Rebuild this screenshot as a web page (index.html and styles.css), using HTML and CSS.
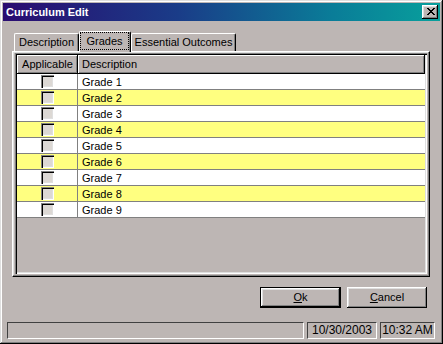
FILE: index.html
```html
<!DOCTYPE html>
<html>
<head>
<meta charset="utf-8">
<link rel="stylesheet" href="styles.css">
</head>
<body>
<div class="window">
  <div class="titlebar">
    <span class="title">Curriculum Edit</span>
    <span class="close">
      <svg width="8" height="7" viewBox="0 0 8 7" shape-rendering="crispEdges">
        <path d="M0 0h2v1h-2zM6 0h2v1h-2zM1 1h2v1h-2zM5 1h2v1h-2zM2 2h4v1h-4zM3 3h2v1h-2zM2 4h4v1h-4zM1 5h2v1h-2zM5 5h2v1h-2zM0 6h2v1h-2zM6 6h2v1h-2z" fill="#000"/>
      </svg>
    </span>
  </div>
  <div class="tabs">
    <div class="tab tab-desc">Description</div>
    <div class="tab tab-sel"><span class="focus">Grades</span></div>
    <div class="tab tab-ess">Essential Outcomes</div>
  </div>
  <div class="panel">
    <div class="grid">
      <div class="row head">
        <div class="cell c1">Applicable</div>
        <div class="cell c2">Description</div>
      </div>
      <div class="row"><div class="cell c1"><span class="chk"></span></div><div class="cell c2">Grade 1</div></div>
      <div class="row alt"><div class="cell c1"><span class="chk"></span></div><div class="cell c2">Grade 2</div></div>
      <div class="row"><div class="cell c1"><span class="chk"></span></div><div class="cell c2">Grade 3</div></div>
      <div class="row alt"><div class="cell c1"><span class="chk"></span></div><div class="cell c2">Grade 4</div></div>
      <div class="row"><div class="cell c1"><span class="chk"></span></div><div class="cell c2">Grade 5</div></div>
      <div class="row alt"><div class="cell c1"><span class="chk"></span></div><div class="cell c2">Grade 6</div></div>
      <div class="row"><div class="cell c1"><span class="chk"></span></div><div class="cell c2">Grade 7</div></div>
      <div class="row alt"><div class="cell c1"><span class="chk"></span></div><div class="cell c2">Grade 8</div></div>
      <div class="row"><div class="cell c1"><span class="chk"></span></div><div class="cell c2">Grade 9</div></div>
    </div>
  </div>
  <div class="buttons">
    <div class="btn btn-default"><span><u>O</u>k</span></div>
    <div class="btn btn-cancel"><span><u>C</u>ancel</span></div>
  </div>
  <div class="status">
    <div class="sp sp-main"></div>
    <div class="sp sp-date">10/30/2003</div>
    <div class="sp sp-time">10:32 AM</div>
  </div>
</div>
</body>
</html>
```
FILE: styles.css
```css
* { box-sizing: border-box; }
html, body { margin: 0; padding: 0; }
body {
  background: #bdb6b4;
  font-family: "Liberation Sans", Arial, sans-serif;
  font-size: 11px;
  color: #000;
}
.window {
  width: 443px;
  height: 344px;
  padding: 3px;
  background: #bdb6b4;
  box-shadow: inset -1px -1px #000, inset 1px 1px #dfdfdf, inset -2px -2px #808080, inset 2px 2px #fff;
  display: flex;
  flex-direction: column;
}
.titlebar {
  height: 18px;
  background: linear-gradient(to right, #2a0c70 0%, #1a3c88 40%, #0a7c98 75%, #08a09c 100%);
  display: flex;
  align-items: center;
  justify-content: space-between;
  padding: 0 2px 0 3px;
}
.title {
  color: #fff;
  font-weight: bold;
  font-size: 11px;
}
.close {
  width: 16px;
  height: 14px;
  background: #bdb6b4;
  box-shadow: inset -1px -1px #000, inset 1px 1px #fff, inset -2px -2px #808080, inset 2px 2px #dfdfdf;
  display: flex;
  align-items: center;
  justify-content: center;
  padding: 0 0 1px 1px;
}
.close svg { display: block; }
.tabs {
  margin: 10px 0 0 11px;
  height: 20px;
  display: flex;
  align-items: flex-end;
  position: relative;
  z-index: 2;
}
.tab {
  height: 18px;
  border-top: 1px solid #fff;
  border-left: 1px solid #fff;
  border-right: 1px solid #000;
  border-radius: 2px 2px 0 0;
  box-shadow: inset -1px 0 #808080;
  display: flex;
  align-items: center;
  justify-content: center;
  background: #bdb6b4;
  padding-bottom: 1px;
}
.tab-desc { width: 65px; }
.tab-sel {
  width: 52px;
  height: 21px;
  margin-bottom: -1px;
  padding: 1px 2px 3px 1px;
}
.tab-ess { width: 105px; }
.focus {
  display: flex;
  align-items: center;
  justify-content: center;
  width: 100%;
  height: 100%;
  outline: 1px dotted #000;
}
.panel {
  margin-left: 9px;
  width: 418px;
  height: 226px;
  border-top: 1px solid #fff;
  border-left: 1px solid #fff;
  border-right: 1px solid #000;
  border-bottom: 1px solid #000;
  box-shadow: inset -1px -1px #808080, inset 1px 1px #dfdfdf;
  padding: 1px 2px 2px 2px;
  display: flex;
}
.grid {
  flex: 1;
  padding: 2px;
  box-shadow: inset 1px 1px #808080, inset 2px 2px #000, inset -1px -1px #fff, inset -2px -2px #dfdfdf;
  display: flex;
  flex-direction: column;
}
.row {
  display: flex;
  height: 16px;
  background: #fff;
  border-bottom: 1px solid #808080;
}
.row.alt { background: #ffff80; }
.cell {
  display: flex;
  align-items: center;
}
.c1 {
  width: 61px;
  justify-content: center;
  border-right: 1px solid #808080;
}
.c2 {
  flex: 1;
  padding-left: 4px;
}
.row.head {
  height: 19px;
  background: #bdb6b4;
  border-bottom: none;
}
.head .cell {
  box-shadow: inset 1px 1px #fff, inset -1px -1px #808080;
  border-right: 1px solid #000;
  border-bottom: 1px solid #000;
}
.head .c1 { padding-left: 1px; }
.head .c2 { padding-left: 4px; }
.chk {
  width: 13px;
  height: 13px;
  background: #dcd8d4;
  box-shadow: inset 1px 1px #808080, inset 2px 2px #000, inset -1px -1px #fff, inset -2px -2px #dfdfdf;
}
.buttons {
  margin: 10px 13px 0 0;
  display: flex;
  justify-content: flex-end;
  gap: 6px;
}
.btn {
  height: 21px;
  display: flex;
  align-items: center;
  justify-content: center;
  background: #bdb6b4;
  padding-bottom: 1px;
}
.btn-default {
  width: 81px;
  border: 1px solid #000;
  box-shadow: inset -1px -1px #000, inset 1px 1px #fff, inset -2px -2px #808080, inset 2px 2px #dfdfdf;
}
.btn-cancel {
  width: 80px;
  box-shadow: inset -1px -1px #000, inset 1px 1px #fff, inset -2px -2px #808080, inset 2px 2px #dfdfdf;
}
.status {
  margin: 14px 5px 0 4px;
  height: 17px;
  display: flex;
  gap: 3px;
}
.sp {
  height: 17px;
  border-top: 1px solid #404040;
  border-left: 1px solid #404040;
  border-right: 1px solid #fff;
  border-bottom: 1px solid #fff;
  display: flex;
  align-items: center;
  justify-content: center;
  font-size: 12px;
  padding-bottom: 1px;
}
.sp-main { flex: 1; }
.sp-date { width: 70px; }
.sp-time { width: 55px; }
```
